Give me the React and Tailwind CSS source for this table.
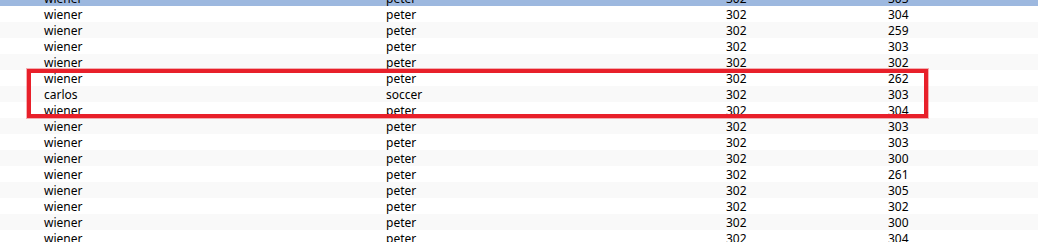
const rows = [
  ['wiener', 'peter', '302', '303'],
  ['wiener', 'peter', '302', '304'],
  ['wiener', 'peter', '302', '259'],
  ['wiener', 'peter', '302', '303'],
  ['wiener', 'peter', '302', '302'],
  ['wiener', 'peter', '302', '262'],
  ['carlos', 'soccer', '302', '303'],
  ['wiener', 'peter', '302', '304'],
  ['wiener', 'peter', '302', '303'],
  ['wiener', 'peter', '302', '303'],
  ['wiener', 'peter', '302', '300'],
  ['wiener', 'peter', '302', '261'],
  ['wiener', 'peter', '302', '305'],
  ['wiener', 'peter', '302', '302'],
  ['wiener', 'peter', '302', '300'],
  ['wiener', 'peter', '302', '304'],
];

export default function App() {
  return (
    <div className="relative w-[1038px] h-[242px] overflow-hidden bg-white text-[12px] text-black" style={{ fontFamily: '"Noto Sans", "Open Sans", sans-serif' }}>
      <div className="-mt-[10px]">
        {rows.map((r, i) => (
          <div
            key={i}
            className={`flex h-[16px] items-center pt-[2px] leading-[14px] ${i === 0 ? 'bg-[#9db8df]' : i % 2 === 0 ? 'bg-[#f9f9f9]' : 'bg-white'}`}
          >
            <span className="w-[386px] pl-[44px]">{r[0]}</span>
            <span className="w-[340px]">{r[1]}</span>
            <span className="w-[162px]">{r[2]}</span>
            <span>{r[3]}</span>
          </div>
        ))}
      </div>

      {/* highlight box */}
      <div className="absolute left-[27px] top-[69px] w-[901px] h-[49px] border-[4px] border-[#e8202a] shadow-[0_0_0_1px_rgba(232,32,42,0.35)] pointer-events-none" />
    </div>
  );
}
